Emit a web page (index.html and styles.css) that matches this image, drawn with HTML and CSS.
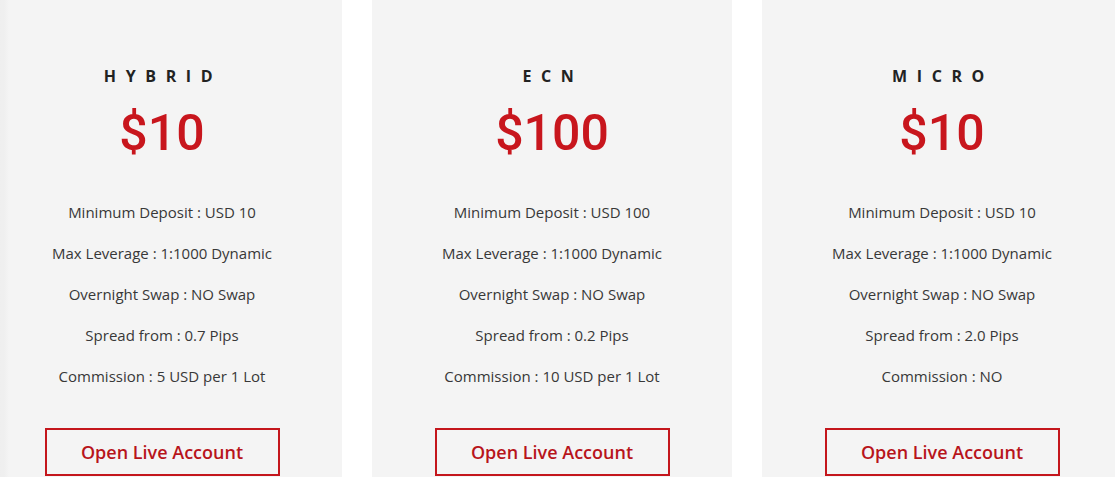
FILE: index.html
```html
<!DOCTYPE html>
<html lang="en">
<head>
<meta charset="utf-8">
<title>Account Types</title>
<link rel="stylesheet" href="styles.css">
</head>
<body>
<div class="plans">
  <div class="plan plan-first">
    <h3 class="plan-name">HYBRID</h3>
    <div class="plan-price">$10</div>
    <ul class="plan-features">
      <li>Minimum Deposit : USD 10</li>
      <li>Max Leverage : 1:1000 Dynamic</li>
      <li>Overnight Swap : NO Swap</li>
      <li>Spread from : 0.7 Pips</li>
      <li>Commission : 5 USD per 1 Lot</li>
    </ul>
    <a class="plan-btn" href="#">Open Live Account</a>
  </div>
  <div class="plan">
    <h3 class="plan-name">ECN</h3>
    <div class="plan-price">$100</div>
    <ul class="plan-features">
      <li>Minimum Deposit : USD 100</li>
      <li>Max Leverage : 1:1000 Dynamic</li>
      <li>Overnight Swap : NO Swap</li>
      <li>Spread from : 0.2 Pips</li>
      <li>Commission : 10 USD per 1 Lot</li>
    </ul>
    <a class="plan-btn" href="#">Open Live Account</a>
  </div>
  <div class="plan">
    <h3 class="plan-name">MICRO</h3>
    <div class="plan-price">$10</div>
    <ul class="plan-features">
      <li>Minimum Deposit : USD 10</li>
      <li>Max Leverage : 1:1000 Dynamic</li>
      <li>Overnight Swap : NO Swap</li>
      <li>Spread from : 2.0 Pips</li>
      <li>Commission : NO</li>
    </ul>
    <a class="plan-btn" href="#">Open Live Account</a>
  </div>
</div>
</body>
</html>
```

FILE: styles.css
```css
html, body {
  margin: 0;
  padding: 0;
  background: #ffffff;
  overflow: hidden;
}

body {
  font-family: "Open Sans", "Liberation Sans", Arial, sans-serif;
  color: #333333;
}

.plans {
  display: flex;
  gap: 30px;
  margin-left: -18px;
  width: 1140px;
}

.plan {
  flex: 0 0 360px;
  background: #f4f4f4;
  display: flex;
  flex-direction: column;
  align-items: center;
  padding-top: 64px;
  height: 500px;
  box-sizing: border-box;
}

.plan-first {
  background: linear-gradient(90deg, #eeeeee 0, #efefef 22px, #f4f4f4 27px, #f4f4f4 100%);
}

.plan-name {
  margin: 0;
  font-size: 16px;
  line-height: 24px;
  font-weight: 700;
  letter-spacing: 9.6px;
  padding-left: 2px;
  color: #222222;
}

.plan-price {
  margin-top: 16px;
  font-family: Roboto, "Liberation Sans", Arial, sans-serif;
  font-size: 50px;
  line-height: 58px;
  font-weight: 500;
  color: #c8161d;
}

.plan-features {
  list-style: none;
  margin: 39px 0 0;
  padding: 0;
  display: flex;
  flex-direction: column;
  align-items: center;
  gap: 19px;
}

.plan-features li {
  font-size: 15px;
  line-height: 22px;
  color: #383838;
}

.plan-btn {
  margin-top: 41px;
  width: 235px;
  height: 48px;
  box-sizing: border-box;
  border: 2px solid #c4161c;
  display: flex;
  align-items: center;
  justify-content: center;
  font-size: 18px;
  line-height: 44px;
  font-weight: 600;
  color: #b8141b;
  text-decoration: none;
}
```
